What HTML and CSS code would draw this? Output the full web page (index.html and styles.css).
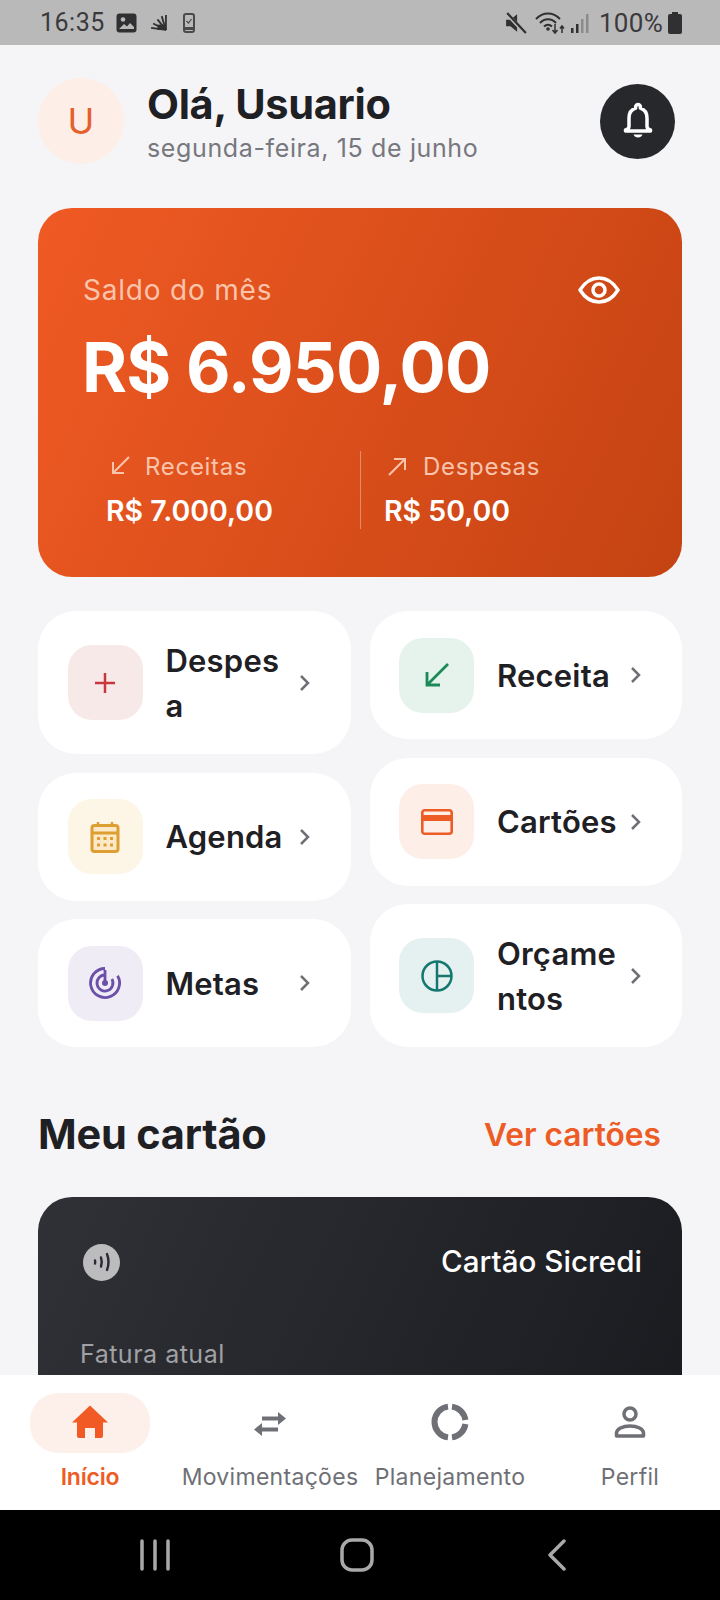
FILE: index.html
```html
<!DOCTYPE html>
<html lang="pt-BR">
    <head>
        <meta charset="utf-8">
        <title>Início</title>
        <link rel="stylesheet" href="styles.css">
    </head>
    <body>
        <div class="statusbar">
            <div class="status-left">
                <span class="clock">16:35</span>
                <svg class="st-pic" width="21" height="20" viewBox="0 0 21 20"><rect x="0.5" y="0.5" width="20" height="19" rx="3" fill="#303033"/><circle cx="7" cy="6.5" r="2.3" fill="#b9b9b9"/><path d="M3 16l5-5 3 2.5 3-3.5 4 4v2z" fill="#b9b9b9"/></svg>
                <svg class="st-fan" width="17" height="17" viewBox="0 0 16 16"><g stroke="#303033" stroke-width="1.7" fill="none"><path d="M15 15L15 1"/><path d="M15 15L11 2"/><path d="M15 15L7 5"/><path d="M15 15L3 9"/><path d="M15 15L1 13"/></g><rect x="7" y="10" width="8" height="5" fill="#303033"/></svg>
                <svg class="st-phone" width="12" height="20" viewBox="0 0 12 20"><rect x="1" y="1" width="10" height="18" rx="2" fill="none" stroke="#4a4a4d" stroke-width="2"/><rect x="2" y="14" width="8" height="3" fill="#4a4a4d"/><path d="M3.5 8l2 2 3-4" fill="none" stroke="#4a4a4d" stroke-width="1.2"/></svg>
            </div>
            <div class="status-right">
                <svg width="22" height="22" viewBox="0 0 20 20"><path d="M1 7h4l6-5v16l-6-5H1z" fill="#303033"/><path d="M2 2l16 17" stroke="#b9b9b9" stroke-width="3.5"/><path d="M2 1l17 18" stroke="#303033" stroke-width="2"/></svg>
                <svg class="st-wifi" width="31" height="24" viewBox="0 0 31 24"><g fill="none" stroke="#303033" stroke-width="2"><path d="M1 8c7-7.500 17-7.500 24 0"/><path d="M5 12c4.500-5 11.500-5 16 0"/><path d="M9 15.500c2.500-2.500 5.500-2.500 8 0"/></g><circle cx="13" cy="18" r="1.800" fill="#303033"/><path d="M20 13v9M17.500 19l2.500 3 2.500-3M27 22v-7M25 17.500l2-2.500 2 2.500" fill="none" stroke="#303033" stroke-width="1.500"/></svg>
                <svg class="st-signal" width="19" height="20" viewBox="0 0 19 20"><rect x="0" y="15" width="2.500" height="5" fill="#303033"/><rect x="5" y="11" width="2.500" height="9" fill="#303033"/><rect x="10" y="6" width="2.500" height="14" fill="#8b8b8b"/><rect x="15" y="1" width="2.500" height="19" fill="#8b8b8b"/></svg>
                <span class="battery-text">100%</span>
                <svg width="14" height="22" viewBox="0 0 14 22"><rect x="4" y="0" width="6" height="3" fill="#303033"/><rect x="0" y="2" width="14" height="20" rx="2" fill="#303033"/></svg>
            </div>
        </div>

        <div class="content">
            <div class="header">
                <div class="avatar">U</div>
                <div class="hello">
                    <div class="hello-name">Olá, Usuario</div>
                    <div class="hello-date">segunda-feira, 15 de junho</div>
                </div>
                <div class="bell">
                    <svg width="34" height="38" viewBox="0 0 34 38"><path d="M17 2.500c-1.300 0-2.400 1-2.400 2.300v1.400C10.300 7.600 8 11.500 8 16v8.500c0 1.800-1.400 3-3.500 3.500v1h25v-1c-2.100-.5-3.500-1.700-3.500-3.500V16c0-4.500-2.300-8.400-6.600-9.800V4.800c0-1.300-1.100-2.300-2.400-2.300z" fill="none" stroke="#fff" stroke-width="3.500" stroke-linejoin="round"/><path d="M12.500 32.500h9c-.7 2-2.400 3-4.500 3s-3.800-1-4.500-3z" fill="#fff"/></svg>
                </div>
            </div>

            <div class="balance">
                <div class="balance-top">
                    <span class="balance-label">Saldo do mês</span>
                    <svg class="eye" width="42" height="28" viewBox="0 0 42 28"><path d="M2 14C7 6 13.500 2 21 2s14 4 19 12c-5 8-11.500 12-19 12S7 22 2 14z" fill="none" stroke="#fff" stroke-width="3.500" stroke-linejoin="round"/><circle cx="21" cy="14" r="6" fill="none" stroke="#fff" stroke-width="3.500"/></svg>
                </div>
                <div class="balance-value">R$ 6.950,00</div>
                <div class="stats">
                    <div class="stat stat-in">
                        <div class="stat-label">
                            <svg width="24" height="24" viewBox="0 0 24 24"><path d="M21 3L5 19M5 8v11h11" fill="none" stroke="#f9c4ab" stroke-width="2"/></svg>
                            Receitas
                        </div>
                        <div class="stat-value">R$ 7.000,00</div>
                    </div>
                    <div class="stat stat-out">
                        <div class="stat-label">
                            <svg width="24" height="24" viewBox="0 0 24 24"><path d="M3 21L19 5M8 5h11v11" fill="none" stroke="#f9c4ab" stroke-width="2"/></svg>
                            Despesas
                        </div>
                        <div class="stat-value">R$ 50,00</div>
                    </div>
                </div>
            </div>

            <div class="actions">
                <div class="action-col">
                    <div class="action">
                        <div class="action-icon bg-red">
                            <svg width="24" height="24" viewBox="0 0 24 24"><path d="M12 2v20M2 12h20" stroke="#c8373c" stroke-width="2.500"/></svg>
                        </div>
                        <div class="action-text">Despesa</div>
                        <svg class="chev" width="12" height="18" viewBox="0 0 12 18"><path d="M2 2l7 7-7 7" fill="none" stroke="#6f7076" stroke-width="2.500"/></svg>
                    </div>
                    <div class="action">
                        <div class="action-icon bg-yellow">
                            <svg width="30" height="32" viewBox="0 0 30 32"><rect x="2" y="4.500" width="26" height="26" rx="2.500" fill="#fbe9c8" stroke="#dd9f32" stroke-width="3"/><path d="M2 12h26" stroke="#dd9f32" stroke-width="3"/><path d="M8 1v5M22 1v5" stroke="#dd9f32" stroke-width="2.500"/><g fill="#dd9f32"><rect x="7" y="16" width="3" height="3"/><rect x="13.500" y="16" width="3" height="3"/><rect x="20" y="16" width="3" height="3"/><rect x="7" y="22.500" width="3" height="3"/><rect x="13.500" y="22.500" width="3" height="3"/><rect x="20" y="22.500" width="3" height="3"/></g></svg>
                        </div>
                        <div class="action-text">Agenda</div>
                        <svg class="chev" width="12" height="18" viewBox="0 0 12 18"><path d="M2 2l7 7-7 7" fill="none" stroke="#6f7076" stroke-width="2.500"/></svg>
                    </div>
                    <div class="action">
                        <div class="action-icon bg-purple">
                            <svg width="32" height="32" viewBox="0 0 32 32"><g fill="none" stroke="#6b4fa8" stroke-width="2.800"><path d="M16 1.500A14.500 14.500 0 1 0 28.600 8.750"/><path d="M16 8A8 8 0 1 0 22.900 12"/><path d="M16 3v13"/></g><circle cx="16" cy="16" r="3" fill="#6b4fa8"/></svg>
                        </div>
                        <div class="action-text">Metas</div>
                        <svg class="chev" width="12" height="18" viewBox="0 0 12 18"><path d="M2 2l7 7-7 7" fill="none" stroke="#6f7076" stroke-width="2.500"/></svg>
                    </div>
                </div>
                <div class="action-col">
                    <div class="action">
                        <div class="action-icon bg-green">
                            <svg width="26" height="26" viewBox="0 0 26 26"><path d="M24 2L3 23M3 10v13h13" fill="none" stroke="#1c8a58" stroke-width="2.800"/></svg>
                        </div>
                        <div class="action-text">Receita</div>
                        <svg class="chev" width="12" height="18" viewBox="0 0 12 18"><path d="M2 2l7 7-7 7" fill="none" stroke="#6f7076" stroke-width="2.500"/></svg>
                    </div>
                    <div class="action">
                        <div class="action-icon bg-orange">
                            <svg width="32" height="26" viewBox="0 0 32 26"><rect x="1.300" y="1.300" width="29.400" height="23.400" rx="2.500" fill="none" stroke="#ee5c26" stroke-width="2.600"/><rect x="1" y="6" width="30" height="6" fill="#ee5c26"/></svg>
                        </div>
                        <div class="action-text">Cartões</div>
                        <svg class="chev" width="12" height="18" viewBox="0 0 12 18"><path d="M2 2l7 7-7 7" fill="none" stroke="#6f7076" stroke-width="2.500"/></svg>
                    </div>
                    <div class="action">
                        <div class="action-icon bg-teal">
                            <svg width="32" height="32" viewBox="0 0 32 32"><g fill="none" stroke="#14786f" stroke-width="2.500"><circle cx="16" cy="16" r="14.500"/><path d="M16 1.500v29M16 16h14.500"/></g></svg>
                        </div>
                        <div class="action-text">Orçamentos</div>
                        <svg class="chev" width="12" height="18" viewBox="0 0 12 18"><path d="M2 2l7 7-7 7" fill="none" stroke="#6f7076" stroke-width="2.500"/></svg>
                    </div>
                </div>
            </div>

            <div class="section-head">
                <span class="section-title">Meu cartão</span>
                <span class="section-link">Ver cartões</span>
            </div>

            <div class="card">
                <div class="card-top">
                    <div class="nfc">
                        <svg width="24" height="24" viewBox="0 0 24 24"><g fill="none" stroke="#2a2b30" stroke-width="2.400" stroke-linecap="round"><path d="M5 10.500c.3 1 .3 2 0 3"/><path d="M11 7.500c1 3 1 6 0 9"/><path d="M17 4c2 5.300 2 10.700 0 16"/></g></svg>
                    </div>
                    <span class="card-name">Cartão Sicredi</span>
                </div>
                <div class="card-label">Fatura atual</div>
            </div>
        </div>

        <div class="bottomnav">
            <div class="nav-item active">
                <div class="nav-pill">
                    <svg width="48" height="48" viewBox="0 0 48 48"><path d="M24 6.500L42 23.500h-5V37a2 2 0 0 1-2 2h-6V29h-10v10h-6a2 2 0 0 1-2-2V23.500H6z" fill="#f15a24"/></svg>
                </div>
                <div class="nav-label">Início</div>
            </div>
            <div class="nav-item">
                <div class="nav-pill">
                    <svg width="48" height="48" viewBox="0 0 48 48"><path d="M16 19.500h17" stroke="#6f7076" stroke-width="4"/><path d="M32 13l8 6.500-8 6.500z" fill="#6f7076"/><path d="M15 30.500h17" stroke="#6f7076" stroke-width="4"/><path d="M16 24l-8 6.500 8 6.500z" fill="#6f7076"/></svg>
                </div>
                <div class="nav-label">Movimentações</div>
            </div>
            <div class="nav-item">
                <div class="nav-pill">
                    <svg width="48" height="48" viewBox="0 0 48 48"><g fill="none" stroke="#6f7076" stroke-width="6"><path d="M26 7.630A15.500 15.500 0 0 1 39.370 21"/><path d="M39.370 25A15.500 15.500 0 0 1 26 38.370"/><path d="M22 38.370A15.500 15.500 0 0 1 22 7.630"/></g></svg>
                </div>
                <div class="nav-label">Planejamento</div>
            </div>
            <div class="nav-item">
                <div class="nav-pill">
                    <svg width="48" height="48" viewBox="0 0 48 48"><circle cx="24" cy="15" r="6" fill="none" stroke="#6f7076" stroke-width="3.500"/><path d="M10.500 37v-3c0-4 6-7 13.500-7s13.500 3 13.500 7v3z" fill="none" stroke="#6f7076" stroke-width="3.500" stroke-linejoin="round"/></svg>
                </div>
                <div class="nav-label">Perfil</div>
            </div>
        </div>

        <div class="sysnav">
            <svg width="30" height="32" viewBox="0 0 30 32"><path d="M2 2v28M15 2v28M28 2v28" stroke="#a9a9a9" stroke-width="3.500" stroke-linecap="round"/></svg>
            <svg width="34" height="34" viewBox="0 0 34 34"><rect x="2" y="2" width="30" height="30" rx="10" fill="none" stroke="#a9a9a9" stroke-width="3.500"/></svg>
            <svg class="sys-back" width="20" height="32" viewBox="0 0 20 32"><path d="M17 2L3 16l14 14" fill="none" stroke="#a9a9a9" stroke-width="3.500" stroke-linecap="round" stroke-linejoin="round"/></svg>
        </div>
    </body>
</html>
```

FILE: styles.css
```css
* {
    box-sizing: border-box;
}

body {
    margin: 0;
    height: 1600px;
    overflow: hidden;
    display: flex;
    flex-direction: column;
    background-color: #f5f5f8;
    font-family: Inter, "Liberation Sans", sans-serif;
    color: #1f2024;
}

/* status bar */
.statusbar {
    height: 45px;
    flex: none;
    background-color: #b9b9b9;
    display: flex;
    justify-content: space-between;
    align-items: center;
    padding: 0 38px 0 40px;
    font-family: Roboto, sans-serif;
    color: #3a3a3d;
}
.status-left, .status-right {
    display: flex;
    align-items: center;
}
.clock {
    font-size: 25px;
    letter-spacing: 0.5px;
    margin-right: 11px;
}
.st-fan {
    margin-left: 13px;
}
.st-phone {
    margin-left: 16px;
}
.st-wifi {
    margin-left: 8px;
}
.st-signal {
    margin-left: 5px;
}
.battery-text {
    font-size: 26px;
    letter-spacing: 0.3px;
    margin: 0 5px 0 9px;
}

.content {
    flex: 1;
    min-height: 0;
    overflow: hidden;
    padding: 32px 38px 0 38px;
}

/* header */
.header {
    display: flex;
    align-items: center;
}
.avatar {
    width: 86px;
    height: 86px;
    border-radius: 50%;
    background-color: #fdeee7;
    color: #e5602c;
    font-size: 36px;
    font-weight: 400;
    display: flex;
    align-items: center;
    justify-content: center;
}
.hello {
    flex: 1;
    margin-left: 23px;
    padding-top: 2px;
}
.hello-name {
    font-size: 41.5px;
    font-weight: 700;
    line-height: 50px;
    letter-spacing: -0.3px;
}
.hello-date {
    font-size: 25px;
    line-height: 34px;
    margin-top: 2px;
    letter-spacing: 0.63px;
    color: #77787e;
}
.bell {
    width: 75px;
    height: 75px;
    margin-right: 7px;
    border-radius: 50%;
    background-color: #27282c;
    display: flex;
    align-items: center;
    justify-content: center;
}

/* balance card */
.balance {
    margin-top: 43px;
    height: 369px;
    padding: 64px 46px 47px 44px;
    border-radius: 34px;
    background: linear-gradient(115deg, #f05a24, #c44312);
    color: #fff;
}
.balance-top {
    height: 36px;
    display: flex;
    justify-content: space-between;
    align-items: center;
}
.balance-label {
    margin-left: 1px;
    font-size: 28px;
    letter-spacing: 0.8px;
    color: #f9c4ab;
}
.eye {
    margin-right: 16px;
}
.balance-value {
    margin-top: 17px;
    font-size: 68.7px;
    line-height: 84px;
    font-weight: 700;
    letter-spacing: -0.8px;
}
.stats {
    margin-top: 42px;
    height: 78px;
    display: flex;
}
.stat-in {
    width: 278px;
    padding-left: 24px;
}
.stat-out {
    flex: 1;
    padding-left: 23px;
    border-left: 1px solid rgba(255, 255, 255, 0.35);
}
.stat-label {
    display: flex;
    align-items: center;
    gap: 13px;
    height: 30px;
    margin-left: 2px;
    font-size: 24px;
    letter-spacing: 0.7px;
    color: #f9c4ab;
}
.stat-value {
    margin-top: 12px;
    font-size: 28.5px;
    line-height: 36px;
    font-weight: 600;
}

/* shortcuts */
.actions {
    margin-top: 34px;
    display: flex;
    gap: 19px;
}
.action-col {
    flex: 1;
    display: flex;
    flex-direction: column;
    gap: 18.5px;
}
.action {
    display: flex;
    align-items: center;
    padding: 26.5px 40px 26.5px 29.5px;
    border-radius: 38px;
    background-color: #fff;
}
.action-icon {
    width: 75px;
    height: 75px;
    flex: none;
    border-radius: 24px;
    display: flex;
    align-items: center;
    justify-content: center;
}
.bg-red { background-color: #f8e9e9; }
.bg-yellow { background-color: #fdf5e6; }
.bg-purple { background-color: #efecf6; }
.bg-green { background-color: #e6f2ec; }
.bg-orange { background-color: #fdeee8; }
.bg-teal { background-color: #e5f1f1; }

.action-text {
    flex: 1;
    min-width: 0;
    margin: 0 9px 0 23px;
    font-size: 31px;
    line-height: 45px;
    font-weight: 600;
    letter-spacing: 0.2px;
    overflow-wrap: anywhere;
}
.chev {
    flex: none;
}

/* my card */
.section-head {
    margin-top: 63px;
    height: 48px;
    display: flex;
    justify-content: space-between;
    align-items: center;
    padding-right: 21px;
}
.section-title {
    font-size: 41.5px;
    font-weight: 700;
    letter-spacing: -0.2px;
}
.section-link {
    font-size: 31.7px;
    font-weight: 600;
    color: #ee5c26;
}
.card {
    margin-top: 39px;
    height: 400px;
    padding: 46px 40px 0 45px;
    border-radius: 34px;
    background: linear-gradient(115deg, #303136, #18191d);
    color: #fff;
}
.card-top {
    display: flex;
    justify-content: space-between;
    align-items: center;
}
.nfc {
    width: 37px;
    height: 37px;
    border-radius: 50%;
    background-color: #bcbcbe;
    display: flex;
    align-items: center;
    justify-content: center;
}
.card-name {
    margin-bottom: 2px;
    font-size: 29.6px;
    font-weight: 500;
}
.card-label {
    margin: 56px 0 0 -3px;
    font-size: 25px;
    line-height: 34px;
    letter-spacing: 0.5px;
    color: #a0a1a5;
}

/* bottom nav */
.bottomnav {
    height: 135px;
    flex: none;
    display: flex;
    background-color: #fff;
    padding-top: 18px;
}
.nav-item {
    width: 180px;
    display: flex;
    flex-direction: column;
    align-items: center;
}
.nav-pill {
    width: 120px;
    height: 60px;
    border-radius: 28px;
    display: flex;
    align-items: center;
    justify-content: center;
}
.active .nav-pill {
    background-color: #fdf0ea;
}
.nav-label {
    margin-top: 9px;
    font-size: 23px;
    line-height: 30px;
    letter-spacing: 0.3px;
    white-space: nowrap;
    color: #6f7076;
}
.active .nav-label {
    color: #ee5c26;
    font-weight: 600;
    letter-spacing: -0.2px;
}

/* android nav */
.sysnav {
    height: 90px;
    flex: none;
    background-color: #000;
    display: flex;
    align-items: center;
    padding: 0 0 0 140px;
    gap: 170px;
}
.sys-back {
    margin-left: 3px;
}
```
